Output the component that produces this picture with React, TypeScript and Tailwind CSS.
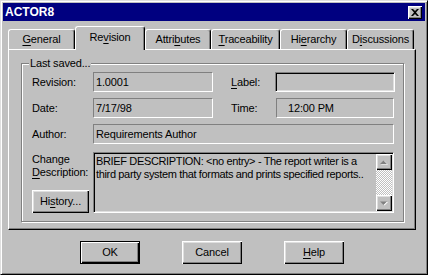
import React from "react";

const raised =
  "shadow-[inset_1px_1px_#fff,inset_-1px_-1px_#000,inset_-2px_-2px_#808080,inset_2px_2px_#dfdfdf]";

function Key({ children }: { children: React.ReactNode }) {
  return <span className="underline underline-offset-[2px] decoration-1">{children}</span>;
}

function Tab({ width, selected, children }: { width: string; selected?: boolean; children: React.ReactNode }) {
  if (selected) {
    return (
      <div
        className={`${width} h-[24px] -mb-px relative z-10 bg-[#c0c0c0] flex items-center justify-center pb-[3px] border-t border-l border-r border-t-white border-l-white border-r-black rounded-t-[3px] shadow-[inset_-1px_0_#808080]`}
      >
        {children}
      </div>
    );
  }
  return (
    <div
      className={`${width} h-[20px] flex items-center justify-center border-t border-l border-r border-t-white border-l-white border-r-black rounded-t-[3px] shadow-[inset_-1px_0_#808080]`}
    >
      {children}
    </div>
  );
}

function Field({ width, children }: { width: string; children?: React.ReactNode }) {
  return (
    <div
      className={`${width} h-[20px] flex items-center px-[2px] border border-t-[#808080] border-l-[#808080] border-r-white border-b-white`}
    >
      {children}
    </div>
  );
}

function Arrow({ up }: { up?: boolean }) {
  return (
    <div className={`w-[16px] h-[16px] bg-[#c0c0c0] flex items-center justify-center ${raised}`}>
      <svg width="8" height="5" viewBox="0 0 8 5">
        {up ? (
          <>
            <polygon points="1,4.5 4.5,1 8,4.5" fill="#fff" />
            <polygon points="0,4 3.5,0.5 7,4" fill="#808080" />
          </>
        ) : (
          <>
            <polygon points="1,1 4.5,4.5 8,1" fill="#fff" />
            <polygon points="0,0.5 3.5,4 7,0.5" fill="#808080" />
          </>
        )}
      </svg>
    </div>
  );
}

function Button({ width, isDefault, children }: { width: string; isDefault?: boolean; children: React.ReactNode }) {
  const cls = isDefault
    ? "border border-black shadow-[inset_1px_1px_#fff,inset_-1px_-1px_#000,inset_-2px_-2px_#808080]"
    : raised;
  return (
    <div className={`${width} h-[23px] flex items-center justify-center bg-[#c0c0c0] ${cls}`}>{children}</div>
  );
}

export default function App() {
  return (
    <div className="w-[428px] h-[275px] bg-[#c0c0c0] border border-t-[#dfdfdf] border-l-[#dfdfdf] border-r-black border-b-black shadow-[inset_1px_1px_#fff,inset_-1px_-1px_#808080] p-[2px] flex flex-col font-['Liberation_Sans',Arial,sans-serif] text-[11px] leading-[13px] tracking-[-0.15px] text-black">
      <div className="h-[18px] bg-[#000080] flex items-center justify-between pl-[2px] pr-[3px]">
        <span className="text-white font-bold text-[12px] tracking-normal">ACTOR8</span>
        <div className={`w-[14px] h-[13px] bg-[#c0c0c0] flex items-center justify-center ${raised}`}>
          <svg width="8" height="7" viewBox="0 0 8 7">
            <path d="M0 0h2l2 2 2-2h2L5 3.5 8 7H6L4 5 2 7H0l3-3.5z" fill="#000" />
          </svg>
        </div>
      </div>

      <div className="mt-[5px] ml-[5px] h-[23px] flex items-end">
        <Tab width="w-[67px]">
          <span><Key>G</Key>eneral</span>
        </Tab>
        <Tab width="w-[70px]" selected>
          <span>Re<Key>v</Key>ision</span>
        </Tab>
        <Tab width="w-[66px]">
          <span>Attri<Key>b</Key>utes</span>
        </Tab>
        <Tab width="w-[69px]">
          <span><Key>T</Key>raceability</span>
        </Tab>
        <Tab width="w-[67px]">
          <span>Hi<Key>e</Key>rarchy</span>
        </Tab>
        <Tab width="w-[67px]">
          <span>D<Key>i</Key>scussions</span>
        </Tab>
      </div>

      <div className="ml-[5px] w-[408px] h-[181px] flex flex-col border border-t-white border-l-white border-r-black border-b-black shadow-[inset_-1px_-1px_#808080]">
        <div className="mt-[13px] ml-[12px] w-[383px] h-[159px] flex flex-col pl-[10px] pr-[8px] border border-[#808080] shadow-[inset_1px_1px_#fff,1px_1px_#fff]">
          <span className="self-start -mt-[7px] -ml-[3px] px-[1px] bg-[#c0c0c0]">Last saved...</span>

          <div className="mt-[2px] h-[20px] flex items-center">
            <span className="w-[61px]">Revision:</span>
            <Field width="w-[120px]">1.0001</Field>
            <span className="ml-[18px] w-[44px]"><Key>L</Key>abel:</span>
            <div className="w-[120px] h-[20px] border border-t-[#808080] border-l-[#808080] border-r-white border-b-white shadow-[inset_1px_1px_#000,inset_-1px_-1px_#dfdfdf]" />
          </div>

          <div className="mt-[6px] h-[20px] flex items-center">
            <span className="w-[61px]">Date:</span>
            <Field width="w-[120px]">7/17/98</Field>
            <span className="ml-[18px] w-[45px]">Time:</span>
            <Field width="w-[118px]">
              <span className="pl-[9px]">12:00 PM</span>
            </Field>
          </div>

          <div className="mt-[6px] h-[20px] flex items-center">
            <span className="w-[61px]">Author:</span>
            <Field width="w-[301px]">Requirements Author</Field>
          </div>

          <div className="mt-[8px] flex">
            <div className="w-[61px] h-[61px] flex flex-col justify-between">
              <div className="pt-[1px]">
                <div>Change</div>
                <div><Key>D</Key>escription:</div>
              </div>
              <Button width="w-[57px]">
                <span>Hi<Key>s</Key>tory...</span>
              </Button>
            </div>
            <div className="w-[301px] h-[61px] flex border border-t-[#808080] border-l-[#808080] border-r-white border-b-white shadow-[inset_1px_1px_#000,inset_-1px_-1px_#dfdfdf] p-px">
              <div className="flex-1 min-w-0 pl-[1px] pt-[1px] tracking-[-0.35px]">
                <div className="whitespace-nowrap">BRIEF DESCRIPTION: &lt;no entry&gt; - The report writer is a</div>
                <div className="whitespace-nowrap">third party system that formats and prints specified reports..</div>
              </div>
              <div className="w-[16px] flex flex-col">
                <Arrow up />
                <div className="flex-1 bg-[repeating-conic-gradient(#c0c0c0_0%_25%,#fff_0%_50%)] bg-[length:2px_2px]" />
                <Arrow />
              </div>
            </div>
          </div>
        </div>
      </div>

      <div className="mt-[11px] ml-[77px] flex gap-[42px]">
        <Button width="w-[60px]" isDefault>
          <span>OK</span>
        </Button>
        <Button width="w-[60px]">
          <span>Cancel</span>
        </Button>
        <Button width="w-[60px]">
          <span><Key>H</Key>elp</span>
        </Button>
      </div>
    </div>
  );
}
